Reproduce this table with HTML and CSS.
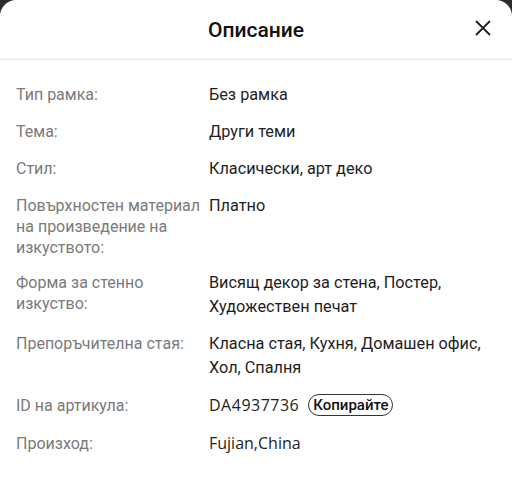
FILE: index.html
```html
<!DOCTYPE html>
<html lang="bg">
<head>
<meta charset="utf-8">
<link rel="stylesheet" href="styles.css">
</head>
<body>
<div class="sheet">
  <header class="head">
    <h1 class="title">Описание</h1>
    <button class="close" aria-label="Затвори">
      <svg width="16" height="16" viewBox="0 0 16 16"><path d="M1.5 1.5 L14.5 14.5 M14.5 1.5 L1.5 14.5" stroke="#1f1f1f" stroke-width="1.8" fill="none" stroke-linecap="round"/></svg>
    </button>
  </header>
  <div class="rows">
    <div class="row"><div class="label">Тип рамка:</div><div class="value">Без рамка</div></div>
    <div class="row"><div class="label">Тема:</div><div class="value">Други теми</div></div>
    <div class="row"><div class="label">Стил:</div><div class="value">Класически, арт деко</div></div>
    <div class="row"><div class="label">Повърхностен материал на произведение на изкуството:</div><div class="value">Платно</div></div>
    <div class="row"><div class="label">Форма за стенно изкуство:</div><div class="value">Висящ декор за стена, Постер, Художествен печат</div></div>
    <div class="row"><div class="label">Препоръчителна стая:</div><div class="value">Класна стая, Кухня, Домашен офис, Хол, Спалня</div></div>
    <div class="row"><div class="label">ID на артикула:</div><div class="value"><span class="latin id">DA4937736</span><span class="copy">Копирайте</span></div></div>
    <div class="row"><div class="label">Произход:</div><div class="value"><span class="latin">Fujian,China</span></div></div>
  </div>
</div>
</body>
</html>
```
FILE: styles.css
```css
html, body {
  margin: 0;
  padding: 0;
  height: 100%;
  background: #2b2b2b;
}
body {
  font-family: Roboto, "Noto Sans", sans-serif;
}
.sheet {
  background: #fff;
  border-radius: 16px 16px 0 0;
  min-height: 100%;
  box-sizing: border-box;
}
.head {
  height: 59px;
  border-bottom: 1px solid #e6e6e6;
  display: flex;
  align-items: center;
  justify-content: center;
  position: relative;
}
.title {
  margin: 0;
  font-size: 21px;
  font-weight: 500;
  color: #111;
  line-height: 24px;
}
.close {
  position: absolute;
  right: 21px;
  top: 20px;
  width: 16px;
  height: 16px;
  padding: 0;
  border: 0;
  background: none;
  display: flex;
}
.rows {
  padding: 23px 16px 0 16px;
  display: flex;
  flex-direction: column;
  gap: 13px;
}
.row {
  display: flex;
  align-items: baseline;
  gap: 7px;
}
.label {
  width: 186px;
  flex: none;
  font-size: 16px;
  line-height: 21px;
  color: #7a7a7a;
}
.value {
  flex: 1;
  font-size: 16.25px;
  line-height: 24px;
  color: #1e1e1e;
}
.latin {
  font-family: "Open Sans", sans-serif;
  font-size: 16px;
}
.id {
  letter-spacing: 0.5px;
}
.copy {
  display: inline-block;
  margin-left: 9px;
  padding: 0 4px;
  height: 22px;
  line-height: 20px;
  box-sizing: border-box;
  border: 1px solid #333;
  border-radius: 11px;
  font-size: 15px;
  font-weight: 500;
  color: #111;
  vertical-align: 1px;
}
```
